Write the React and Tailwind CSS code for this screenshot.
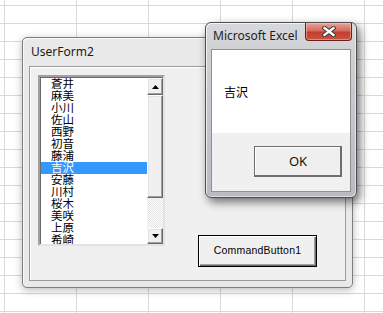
import React from "react";

const names = ["蒼井", "麻美", "小川", "佐山", "西野", "初音", "藤浦", "吉沢", "安藤", "川村", "桜木", "美咲", "上原", "希崎"];
const selected = 7;

const raised = "bg-[#f0f0f0] border border-t-white border-l-white border-r-[#696969] border-b-[#696969] shadow-[inset_-1px_-1px_0_#a0a0a0,inset_1px_1px_0_#e3e3e3]";

function Arrow({ up }) {
  return (
    <svg width="7" height="4" viewBox="0 0 7 4">
      <path d={up ? "M3.5 0 L7 4 L0 4 Z" : "M0 0 L7 0 L3.5 4 Z"} fill="#000" />
    </svg>
  );
}

function ListBox() {
  return (
    <div className="w-[127px] h-[171px] flex bg-white border-2 border-t-[#a0a0a0] border-l-[#a0a0a0] border-r-[#e3e3e3] border-b-[#e3e3e3] shadow-[inset_1px_1px_0_#696969] overflow-hidden">
      <div className="w-[107px] pt-[1px] pl-[1px] overflow-hidden">
        {names.map((n, i) => (
          <div
            key={n}
            className={`h-[12px] leading-[12px] pl-[10px] text-[11.5px] ${i === selected ? "bg-[#3399ff] text-white" : "text-black"}`}
          >
            {n}
          </div>
        ))}
      </div>
      <div className="w-[16px] flex flex-col pt-[1px]">
        <div className={`h-[17px] flex items-center justify-center ${raised}`}><Arrow up /></div>
        <div className={`h-[103px] ${raised}`} />
        <div className="flex-1 [background-image:repeating-conic-gradient(#e4e4e4_0_25%,#ffffff_0_50%)] [background-size:2px_2px]" />
        <div className={`h-[16px] flex items-center justify-center ${raised}`}><Arrow /></div>
      </div>
    </div>
  );
}

function UserForm() {
  return (
    <div className="absolute left-[22px] top-[37px] w-[331px] h-[251px] flex flex-col rounded-[5px] border border-[#7d7d7d] bg-[#e9e9e9] shadow-[0_2px_8px_rgba(0,0,0,0.28),inset_1px_1px_0_#f8f8f8] px-[6px] pb-[6px]">
      <div className="h-[28px] shrink-0 flex items-center pl-[2px] text-[12px] text-[#1b1b1b]">UserForm2</div>
      <div className="flex-1 flex items-start border border-[#9a9a9a] bg-[#f0f0f0] shadow-[inset_1px_1px_0_#ffffff] pl-[8px] pt-[8px]">
        <ListBox />
        <button className="ml-[33px] mt-[160px] w-[119px] h-[32px] border border-black bg-[#f0f0f0] shadow-[inset_1px_1px_0_#ffffff,inset_-1px_-1px_0_#696969,inset_-2px_-2px_0_#a0a0a0] text-[10.5px] text-black font-['Liberation_Sans',sans-serif] tracking-[0.2px]">
          CommandButton1
        </button>
      </div>
    </div>
  );
}

function MsgBox() {
  return (
    <div className="absolute left-[205px] top-[22px] w-[152px] h-[176px] flex flex-col rounded-[6px] border border-[#4e4e4e] bg-[linear-gradient(to_bottom,#d6d8db,#c6c9cd_40%,#b8bcc0)] shadow-[3px_4px_10px_rgba(0,0,0,0.55),inset_1px_1px_0_rgba(255,255,255,0.7),inset_-1px_-1px_0_rgba(255,255,255,0.5)] px-[5px] pb-[5px]">
      <div className="relative h-[26px] shrink-0 flex items-center pl-[2px] text-[12px] text-[#1e1e1e]">
        Microsoft Excel
      </div>
      <div className="absolute top-0 right-[4px] w-[47px] h-[18px] rounded-b-[4px] border border-t-0 border-[#6b2019] bg-[linear-gradient(to_bottom,#e6a69d,#d66a5c_45%,#c2402f_55%,#c9533f)] shadow-[inset_0_0_0_1px_rgba(255,210,200,0.45)] flex items-center justify-center">
        <svg width="14" height="11" viewBox="0 0 14 11">
          <path d="M2.5 2 L11.5 9 M11.5 2 L2.5 9" stroke="#3b3b3b" strokeWidth="4.2" strokeLinecap="square" />
          <path d="M2.5 2 L11.5 9 M11.5 2 L2.5 9" stroke="#ffffff" strokeWidth="2.3" strokeLinecap="square" />
        </svg>
      </div>
      <div className="flex-1 flex flex-col border border-[#8d9094] bg-[#f0f0f0]">
        <div className="h-[83px] bg-white pl-[12px] pt-[36px] text-[12px] leading-[14px] text-black">吉沢</div>
        <div className="flex-1 flex justify-end pt-[13px] pr-[8px]">
          <button className="w-[88px] h-[31px] border border-[#6e6e6e] bg-[#efefef] shadow-[inset_-1px_-1px_0_#6e6e6e,inset_1px_1px_0_#ffffff] text-[13px] text-[#111]">
            OK
          </button>
        </div>
      </div>
    </div>
  );
}

export default function App() {
  return (
    <div className="relative w-[383px] h-[313px] overflow-hidden bg-white font-['Noto_Sans','Noto_Sans_CJK_JP',sans-serif] [background-image:linear-gradient(90deg,#d9d9d9_1px,transparent_1px),linear-gradient(#d9d9d9_1px,transparent_1px)] [background-size:72px_18px] [background-position:4px_5px]">
      <UserForm />
      <MsgBox />
    </div>
  );
}
